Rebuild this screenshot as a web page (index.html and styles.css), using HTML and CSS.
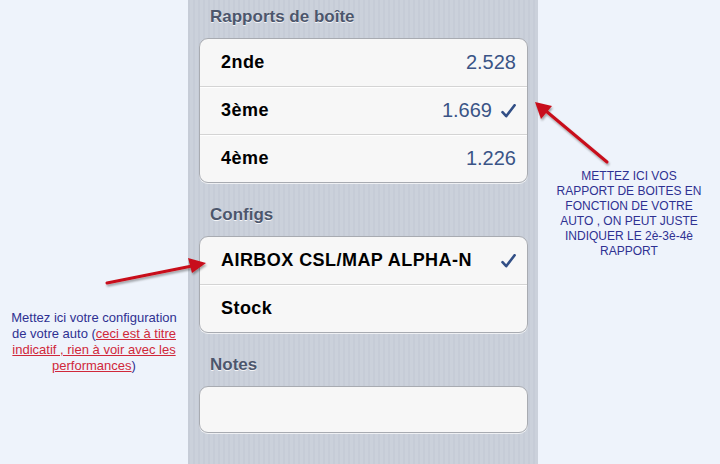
FILE: index.html
```html
<!DOCTYPE html>
<html lang="fr">
<head>
<meta charset="utf-8">
<title>Rapports</title>
<link rel="stylesheet" href="styles.css">
</head>
<body>
<div class="page">
  <aside class="note note-left">
    <p>Mettez ici votre configuration<br>de votre auto (<span class="red">ceci est à titre</span><br><span class="red">indicatif , rien à voir avec les</span><br><span class="red">performances</span>)</p>
  </aside>
  <main class="phone">
    <h2 class="group-title first">Rapports de boîte</h2>
    <div class="group">
      <div class="row"><span class="label">2nde</span><span class="value">2.528</span></div>
      <div class="row"><span class="label">3ème</span><span class="value">1.669</span><svg class="check" viewBox="0 0 15 14" width="15" height="14"><path d="M1.5 8.2 L5.2 12.2 L13.6 1.2" fill="none" stroke="#324f86" stroke-width="2.6" stroke-linecap="round" stroke-linejoin="round"/></svg></div>
      <div class="row"><span class="label">4ème</span><span class="value">1.226</span></div>
    </div>
    <h2 class="group-title">Configs</h2>
    <div class="group">
      <div class="row"><span class="label">AIRBOX CSL/MAP ALPHA-N</span><svg class="check" viewBox="0 0 15 14" width="15" height="14"><path d="M1.5 8.2 L5.2 12.2 L13.6 1.2" fill="none" stroke="#324f86" stroke-width="2.6" stroke-linecap="round" stroke-linejoin="round"/></svg></div>
      <div class="row"><span class="label">Stock</span></div>
    </div>
    <h2 class="group-title">Notes</h2>
    <div class="group notes"></div>
  </main>
  <aside class="note note-right">
    <p>METTEZ ICI VOS<br>RAPPORT DE BOITES EN<br>FONCTION DE VOTRE<br>AUTO , ON PEUT JUSTE<br>INDIQUER LE 2è-3è-4è<br>RAPPORT</p>
  </aside>
  <svg class="arrows" viewBox="0 0 720 464" width="720" height="464">
    <defs>
      <filter id="sh" x="-20%" y="-20%" width="140%" height="140%">
        <feGaussianBlur in="SourceAlpha" stdDeviation="1.2"/>
        <feOffset dx="1" dy="2" result="b"/>
        <feComponentTransfer><feFuncA type="linear" slope="0.35"/></feComponentTransfer>
        <feMerge><feMergeNode/><feMergeNode in="SourceGraphic"/></feMerge>
      </filter>
    </defs>
    <g filter="url(#sh)" fill="#c8101a" stroke="#c8101a">
      <line x1="107" y1="283" x2="192" y2="266" stroke-width="3" stroke-linecap="round"/>
      <polygon points="206,263 188,258 192,273" stroke="none"/>
      <line x1="607" y1="162" x2="546" y2="111" stroke-width="3" stroke-linecap="round"/>
      <polygon points="535,102 541,119 552,106" stroke="none"/>
    </g>
  </svg>
</div>
</body>
</html>
```
FILE: styles.css
```css
html, body {
  margin: 0;
  padding: 0;
}
body {
  background: #eef3fb;
  font-family: "Liberation Sans", Arial, sans-serif;
}
.page {
  position: relative;
  width: 720px;
  height: 464px;
  overflow: hidden;
  display: flex;
}
.note {
  color: #2e3192;
  font-size: 12px;
  line-height: 15px;
  text-align: center;
}
.note p {
  margin: 0;
}
.note-left {
  width: 188px;
  padding-top: 310px;
  font-size: 13px;
  line-height: 16px;
  box-sizing: border-box;
}
.note-right {
  width: 182px;
  padding-top: 169px;
  box-sizing: border-box;
}
.red {
  color: #d0283a;
  text-decoration: underline;
}
.phone {
  width: 350px;
  height: 464px;
  box-sizing: border-box;
  padding: 0 10px 0 11px;
  background-color: #c8ced8;
  background-image: repeating-linear-gradient(90deg, #c6ccd7 0, #c6ccd7 2px, #cbd1db 2px, #cbd1db 5px);
}
.group-title {
  margin: 0;
  padding: 22px 0 11px 11px;
  height: 20px;
  line-height: 20px;
  font-size: 17px;
  font-weight: bold;
  color: #4c566c;
  text-shadow: 0 1px 0 rgba(255, 255, 255, 0.8);
}
.group-title.first {
  padding-top: 7px;
}
.group {
  background: #f7f7f7;
  border: 1px solid #a8abb1;
  border-radius: 9px;
  box-shadow: 0 1px 0 rgba(255, 255, 255, 0.7);
  overflow: hidden;
}
.row {
  height: 47px;
  display: flex;
  align-items: center;
  padding: 0 11px 0 21px;
  border-top: 1px solid #d4d4d4;
  box-shadow: inset 0 1px 0 #ffffff;
}
.row:first-child {
  border-top: none;
  height: 47px;
  box-shadow: none;
}
.label {
  flex: 1;
  font-size: 18px;
  font-weight: bold;
  letter-spacing: 0.45px;
  color: #000;
}
.value {
  font-size: 20px;
  color: #3a5486;
}
.check {
  margin-left: 9px;
  flex: none;
}
.notes {
  height: 45px;
}
.arrows {
  position: absolute;
  left: 0;
  top: 0;
  pointer-events: none;
}
```
